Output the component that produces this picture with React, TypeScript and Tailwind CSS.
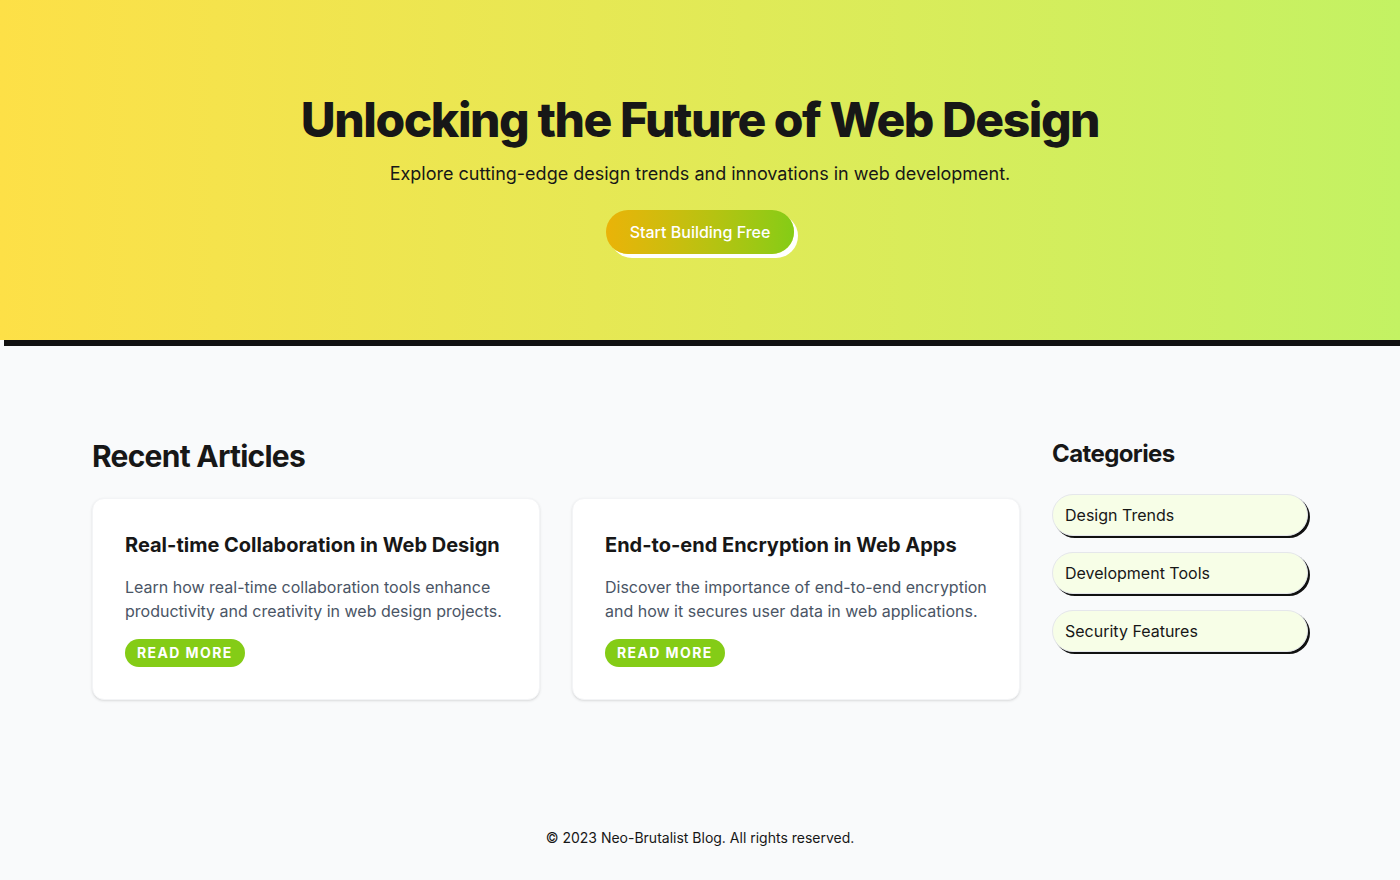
export default function App() {
  const articles = [
    {
      title: "Real-time Collaboration in Web Design",
      body: "Learn how real-time collaboration tools enhance productivity and creativity in web design projects.",
    },
    {
      title: "End-to-end Encryption in Web Apps",
      body: "Discover the importance of end-to-end encryption and how it secures user data in web applications.",
    },
  ];
  const categories = ["Design Trends", "Development Tools", "Security Features"];

  return (
    <div className="min-h-screen bg-gray-50 font-['Inter',sans-serif] text-neutral-900">
      {/* Hero */}
      <header className="bg-gradient-to-r from-[#fde047] to-[#c3f263] shadow-[4px_6px_0_0_#111] pt-24 pb-[86px] text-center">
        <h1 className="text-5xl leading-none font-extrabold tracking-[-0.03em] text-neutral-900">
          Unlocking the Future of Web Design
        </h1>
        <p className="mt-4 text-lg text-neutral-900">
          Explore cutting-edge design trends and innovations in web development.
        </p>
        <button
          type="button"
          className="mt-[22px] rounded-full bg-gradient-to-r from-[#eab308] to-[#84cc16] px-6 py-2.5 font-medium text-white shadow-[4px_4px_0_0_#fff]"
        >
          Start Building Free
        </button>
      </header>

      <main className="mx-auto max-w-7xl px-8 pt-[98px] pb-24 flex gap-8">
        <section className="flex-1">
          <h2 className="text-3xl font-bold tracking-tight mb-6">Recent Articles</h2>
          <div className="grid grid-cols-2 gap-8">
            {articles.map((a) => (
              <article
                key={a.title}
                className="rounded-xl border border-gray-100 bg-white p-8 shadow-sm"
              >
                <h3 className="text-xl font-bold mb-4">{a.title}</h3>
                <p className="text-gray-600 leading-6">{a.body}</p>
                <a
                  href="#"
                  className="mt-4 inline-block rounded-full bg-[#84cc16] px-3 py-1 text-sm font-bold uppercase tracking-widest text-white leading-5"
                >
                  Read More
                </a>
              </article>
            ))}
          </div>
        </section>

        <aside className="w-64 shrink-0">
          <h2 className="text-2xl font-bold tracking-tight mb-6">Categories</h2>
          <ul className="space-y-4">
            {categories.map((c) => (
              <li
                key={c}
                className="rounded-full border border-gray-200 bg-lime-50 px-3 py-2 shadow-[2px_2px_0_0_#111]"
              >
                {c}
              </li>
            ))}
          </ul>
        </aside>
      </main>

      <footer className="py-8 text-center text-sm text-neutral-900">
        © 2023 Neo-Brutalist Blog. All rights reserved.
      </footer>
    </div>
  );
}
